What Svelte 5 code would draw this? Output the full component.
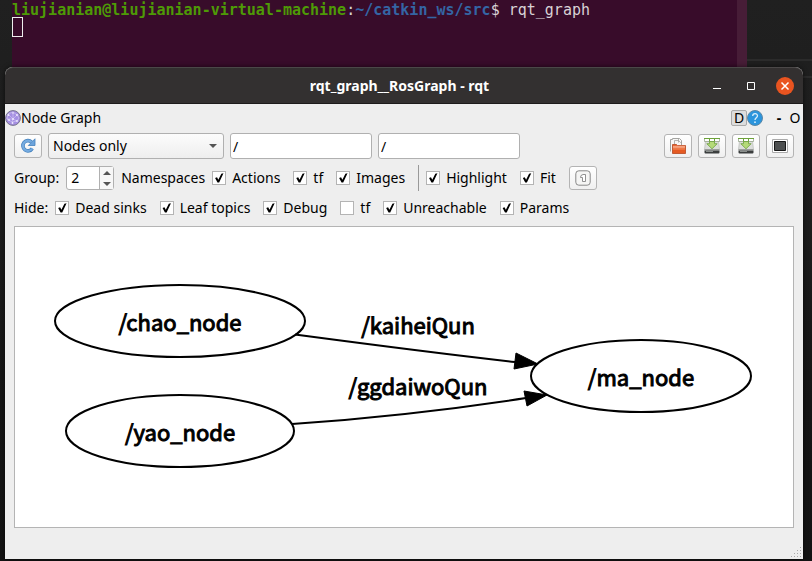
<script>
  let mode = $state('Nodes only');
  let include = $state('/');
  let exclude = $state('/');
  let depth = $state(2);

  let groupOptions = $state([
    { id: 'actions', label: 'Actions', on: true },
    { id: 'group-tf', label: 'tf', on: true },
    { id: 'images', label: 'Images', on: true }
  ]);
  let viewOptions = $state([
    { id: 'highlight', label: 'Highlight', on: true },
    { id: 'fit', label: 'Fit', on: true }
  ]);
  let hideOptions = $state([
    { id: 'dead', label: 'Dead sinks', on: true },
    { id: 'leaf', label: 'Leaf topics', on: true },
    { id: 'debug', label: 'Debug', on: true },
    { id: 'hide-tf', label: 'tf', on: false },
    { id: 'unreachable', label: 'Unreachable', on: true },
    { id: 'params', label: 'Params', on: true }
  ]);

  const nodes = [
    { name: '/chao_node', x: 165, y: 94, rx: 125 },
    { name: '/yao_node', x: 165, y: 204, rx: 114 },
    { name: '/ma_node', x: 626, y: 149, rx: 110 }
  ];
  const edges = [
    { topic: '/kaiheiQun', x: 403, y: 107, d: 'M280 107.500C344 116 428 127 500 135', head: '523,137 499,142 501,126' },
    { topic: '/ggdaiwoQun', x: 403, y: 168, d: 'M277 197C350 192 440 182 511 171', head: '532,168 512,179 509,164' }
  ];
</script>

{#snippet check(option)}
  <label class="check">
    <input type="checkbox" id={option.id} bind:checked={option.on} />
    <span>{option.label}</span>
  </label>
{/snippet}

{#snippet saveIcon()}
  <svg viewBox="0 0 16 16" width="16" height="16" aria-hidden="true">
    <path d="M1.500 3h13l1 8.500H.5z" fill="#dcdedb" stroke="#b9bbb7" stroke-width=".7" />
    <path d="M.5 11h15v1.500H.5z" fill="#9b9e9b" />
    <path d="M.5 12.500h15v2q0 1-1 1h-13q-1 0-1-1z" fill="#3b3e3e" />
    <path d="M2 13.500h7" stroke="#8b908d" />
    <path d="M.5.500h15v3H.5z" fill="#fff" stroke="#8a9a7c" stroke-width=".7" />
    <path d="M0 .5h16" stroke="#6da23a" />
    <path d="M5.500 3.500h5v2.200h2.700L8 10.800 2.800 5.700h2.700z" fill="#b4da78" stroke="#6c9f3c" stroke-width=".8" />
    <path d="M5.500 1v2.500m5-2.500v2.500" stroke="#6da23a" />
  </svg>
{/snippet}

<div class="desktop">
  <section class="terminal" aria-label="Terminal">
    <div class="prompt"><b class="user">liujianian@liujianian-virtual-machine</b>:<b class="path">~/catkin_ws/src</b>$ rqt_graph</div>
    <div class="cursor"></div>
  </section>

  <main class="window">
    <header class="titlebar">
      <h1>rqt_graph__RosGraph - rqt</h1>
      <div class="controls">
        <button aria-label="Minimize"><svg viewBox="0 0 18 18" width="18" height="18"><path d="M5 11.500h8" stroke="#fff" /></svg></button>
        <button aria-label="Maximize"><svg viewBox="0 0 18 18" width="18" height="18"><path d="M5.500 5.500h7v7h-7z" fill="none" stroke="#fff" /></svg></button>
        <button class="close" aria-label="Close"><svg viewBox="0 0 18 18" width="18" height="18"><path d="m5.500 5.500 7 7m0-7-7 7" stroke="#fff" stroke-width="1.500" /></svg></button>
      </div>
    </header>

    <div class="dock">
      <svg viewBox="0 0 16 16" width="16" height="16" aria-hidden="true">
        <circle cx="8" cy="8" r="7.400" fill="#a58fe2" stroke="#77758c" />
        <path d="m3 4 5-2 4 3-4 4-5-5m0 0-1 5 5 3 5-1 2-3-2-3M8 2l0 7-6 0m6 0 4 2m-5 1 1-3M8 13l-1-1" fill="none" stroke="#c9bdf0" stroke-width=".8" />
        <g fill="#eee9ff"><circle cx="3.500" cy="5" r=".9" /><circle cx="8" cy="3" r=".8" /><circle cx="12" cy="5" r="1" /><circle cx="8" cy="9" r="1" /><circle cx="4" cy="10" r=".9" /><circle cx="12" cy="11" r=".9" /><circle cx="7.500" cy="13" r=".9" /></g>
      </svg>
      <h2>Node Graph</h2>
      <button class="dock-d">D</button>
      <button class="help" aria-label="Help">
        <svg viewBox="0 0 16 16" width="16" height="16">
          <circle cx="8" cy="8" r="7.500" fill="#2b95dd" stroke="#5c87a5" />
          <path d="M5.700 6c0-3 4.800-3 4.800-.3C10.500 7.700 8 7.700 8 10" fill="none" stroke="#d8eefb" stroke-width="1.300" />
          <circle cx="8" cy="12.200" r=".9" fill="#d8eefb" />
        </svg>
      </button>
      <button class="plain dash">-</button>
      <button class="plain">O</button>
    </div>

    <div class="tools">
      <div class="row fields">
        <button class="tool" aria-label="Refresh">
          <svg viewBox="0 0 16 16" width="16" height="16">
            <path d="M12.300 10.500A5.100 5.100 0 1 1 11.500 4" fill="none" stroke="#4481bd" stroke-width="3.600" />
            <path d="M15 .8v6.700H8.300z" fill="#6ca4dc" stroke="#4481bd" stroke-width=".8" />
            <path d="M12.300 10.500A5.100 5.100 0 1 1 11.500 4" fill="none" stroke="#75abe0" stroke-width="2.200" />
          </svg>
        </button>
        <div class="select">
          <select bind:value={mode} aria-label="Graph type">
            <option>Nodes only</option>
            <option>Nodes/Topics (active)</option>
            <option>Nodes/Topics (all)</option>
          </select>
        </div>
        <input class="field" type="text" bind:value={include} aria-label="Node filter" />
        <input class="field" type="text" bind:value={exclude} aria-label="Topic filter" />
        <div class="actions">
          <button class="tool" aria-label="Load graph">
            <svg viewBox="0 0 16 16" width="16" height="16">
              <path d="M.5 13.500v-12h2v-1h7l2 2V8" fill="#f7f7f6" stroke="#a3a3a0" />
              <path d="M4.500 6V2.500h4l2 2H12M8.500.5v4" fill="none" stroke="#a3a3a0" stroke-width=".8" />
              <path d="M2.500 15.500v-9h4l1 1h8v8z" fill="#e55a22" stroke="#c05a35" />
              <path d="M3 7.800h12v3H3z" fill="#f6a27e" />
              <path d="M3 9.800h12v2H3z" fill="#ef7a48" />
            </svg>
          </button>
          <button class="tool" aria-label="Save as DOT">{@render saveIcon()}</button>
          <button class="tool" aria-label="Save as SVG">{@render saveIcon()}</button>
          <button class="tool" aria-label="Save as image">
            <svg viewBox="0 0 16 16" width="16" height="16">
              <path d="M.5 1.500h15v13H.5z" fill="#fff" stroke="#aaa" />
              <path d="M2.500 3.500h11v9h-11z" fill="#4d4f50" stroke="#181818" />
            </svg>
          </button>
        </div>
      </div>

      <div class="row">
        <label for="depth">Group:</label>
        <div class="spin">
          <input id="depth" type="number" bind:value={depth} />
          <div class="steps">
            <button aria-label="Increase" onclick={() => depth++}><i class="up"></i></button>
            <button aria-label="Decrease" onclick={() => depth--}><i class="down"></i></button>
          </div>
        </div>
        <span>Namespaces</span>
        <div class="checks">
          {#each groupOptions as option (option.id)}{@render check(option)}{/each}
          <div class="divider"></div>
        </div>
        <div class="checks">
          {#each viewOptions as option (option.id)}{@render check(option)}{/each}
          <button class="tool" aria-label="Fit in view">
            <svg viewBox="0 0 16 16" width="16" height="16">
              <rect x=".8" y=".8" width="14.400" height="14.400" rx="3" fill="#f5f5f4" stroke="#888" />
              <path d="M6 5.500 8 4.500h2.500v7H7.500V7.500H5.500z" fill="#fff" stroke="#858585" stroke-width=".9" />
            </svg>
          </button>
        </div>
      </div>

      <div class="row">
        <span>Hide:</span>
        <div class="checks">
          {#each hideOptions as option (option.id)}{@render check(option)}{/each}
        </div>
      </div>
    </div>

    <div class="canvas">
      <svg viewBox="0 0 778 300" role="img" aria-label="Node graph">
        {#each edges as edge}
          <path class="line" d={edge.d} />
          <polygon points={edge.head} stroke="#000" />
          <text x={edge.x} y={edge.y}>{edge.topic}</text>
        {/each}
        {#each nodes as node}
          <ellipse class="line" cx={node.x} cy={node.y} rx={node.rx} ry="36" />
          <text x={node.x} y={node.y + 10}>{node.name}</text>
        {/each}
      </svg>
    </div>

    <footer>
      <svg viewBox="0 0 12 12" width="12" height="12" aria-hidden="true">
        <path d="M1 10.500h10M4 7.500h7M7 4.500h4M10 1.500h1" stroke="#aaa" stroke-dasharray="1 2" />
      </svg>
    </footer>
  </main>
</div>

<style>
  :global(body) {
    margin: 0;
    background: #151515;
  }
  * {
    box-sizing: border-box;
  }
  .desktop {
    min-height: 100vh;
    padding-bottom: 2px;
    overflow: hidden;
    background:
      linear-gradient(#2b2b2b, #2b2b2b) right 59px / 65px 2px no-repeat,
      linear-gradient(#2b2b2b, #2b2b2b) right 76px / 65px 2px no-repeat,
      linear-gradient(#202020, #1c1c1c 230px, #151515 400px, #131313);
    color: #000;
    font: 14px/22px 'Noto Sans', 'Open Sans', sans-serif;
  }
  .terminal {
    height: 76px;
    margin: 0 65px 0 12px;
    border-right: 10px solid #471d37;
    background: #380c2a;
    color: #d8d2d6;
    font: 15px/14px 'DejaVu Sans Mono', monospace;
  }
  .prompt {
    padding-top: 3px;
    white-space: nowrap;
  }
  .user {
    color: #4e9a06;
  }
  .path {
    color: #3465a4;
  }
  .cursor {
    width: 11px;
    height: 20px;
    border: 1px solid #eee;
  }
  .window {
    position: relative;
    margin: -9px 9px 0 5px;
    border-radius: 8px 8px 0 0;
    background: #eee;
    box-shadow: 0 0 5px #0009;
  }
  .titlebar {
    display: grid;
    grid-template-columns: 1fr auto 1fr;
    align-items: center;
    height: 37px;
    padding-right: 9px;
    border-top: 1px solid #4b4848;
    border-bottom: 1px solid #1d1b1b;
    border-radius: 8px 8px 0 0;
    background: #333030;
  }
  h1,
  h2 {
    margin: 0;
    font: inherit;
  }
  h1 {
    grid-column: 2;
    color: #fff;
    font-weight: 700;
  }
  .controls {
    display: flex;
    justify-content: flex-end;
    gap: 16px;
  }
  button {
    display: grid;
    place-items: center;
    padding: 0;
    border: 0;
    background: none;
    color: inherit;
    font: inherit;
  }
  svg {
    display: block;
  }
  .close {
    border-radius: 50%;
    background: #e95420;
  }
  .dock {
    display: flex;
    align-items: center;
    height: 27px;
    padding-right: 1px;
  }
  h2 {
    flex: 1;
  }
  .dock-d {
    width: 16px;
    height: 16px;
    border: 1px solid #aaa;
    border-radius: 2px;
    background: #ddd;
    line-height: 14px;
  }
  .plain {
    width: 14px;
  }
  .dash {
    margin: 0 2px 0 9px;
    font-weight: 700;
  }
  .tools {
    display: grid;
    gap: 6px;
    padding: 2px 9px 7px;
  }
  .row {
    display: flex;
    align-items: center;
    gap: 7px;
  }
  .fields {
    gap: 6px;
  }
  .tool {
    width: 28px;
    height: 24px;
    border: 1px solid #b4b4b4;
    border-radius: 3px;
    background: linear-gradient(#fff, #f0f0f0);
  }
  .select {
    position: relative;
    width: 176px;
  }
  select {
    display: block;
    width: 100%;
    height: 26px;
    padding: 0 4px;
    appearance: none;
    border: 1px solid #b0b0b0;
    border-radius: 3px;
    background: linear-gradient(#fcfcfc, #eee);
    color: inherit;
    font: inherit;
  }
  .select::after {
    position: absolute;
    top: 11px;
    right: 7px;
    border: 4px solid transparent;
    border-top-color: #555;
    content: '';
    pointer-events: none;
  }
  .field {
    width: 142px;
    height: 26px;
    padding: 0 2px;
    border: 1px solid #b0b0b0;
    border-radius: 3px;
    background: #fff;
    font: inherit;
  }
  .actions {
    display: flex;
    gap: 6px;
    margin-left: auto;
  }
  .spin {
    display: flex;
    width: 48px;
    height: 24px;
    border: 1px solid #b0b0b0;
    border-radius: 3px;
    background: #fff;
  }
  .spin input {
    width: 32px;
    padding: 0 4px;
    appearance: textfield;
    border: 0;
    background: none;
    font: inherit;
  }
  .spin input::-webkit-inner-spin-button {
    display: none;
  }
  .steps {
    display: grid;
    flex: 1;
    border-left: 1px solid #b0b0b0;
    background: #f7f7f7;
  }
  .up,
  .down {
    border: 4px solid transparent;
  }
  .up {
    border-top: 0;
    border-bottom-color: #555;
  }
  .down {
    border-bottom: 0;
    border-top-color: #555;
  }
  .checks {
    display: flex;
    align-items: center;
    gap: 13px;
  }
  .check {
    display: flex;
    align-items: center;
    gap: 6px;
  }
  .check input {
    width: 14px;
    height: 14px;
    margin: 0;
    appearance: none;
    border: 1px solid #b4b4b4;
    background: #fff;
  }
  .check input:checked::before {
    display: block;
    width: 12px;
    height: 12px;
    background: #000;
    clip-path: polygon(16% 50%, 32% 44%, 43% 64%, 68% 14%, 86% 10%, 50% 88%, 36% 88%);
    content: '';
  }
  .divider {
    width: 1px;
    height: 26px;
    background: #999;
  }
  .canvas {
    margin: 0 9px;
    border: 1px solid #b4b4b4;
    background: #fff;
  }
  .canvas svg {
    width: 100%;
    height: auto;
  }
  .line {
    fill: none;
    stroke: #000;
    stroke-width: 2;
  }
  text {
    font: 22px 'Noto Sans CJK SC', sans-serif;
    stroke: #000;
    stroke-width: 1;
    text-anchor: middle;
  }
  footer {
    display: flex;
    align-items: end;
    justify-content: flex-end;
    height: 31px;
    padding: 0 1px 1px;
  }
</style>
